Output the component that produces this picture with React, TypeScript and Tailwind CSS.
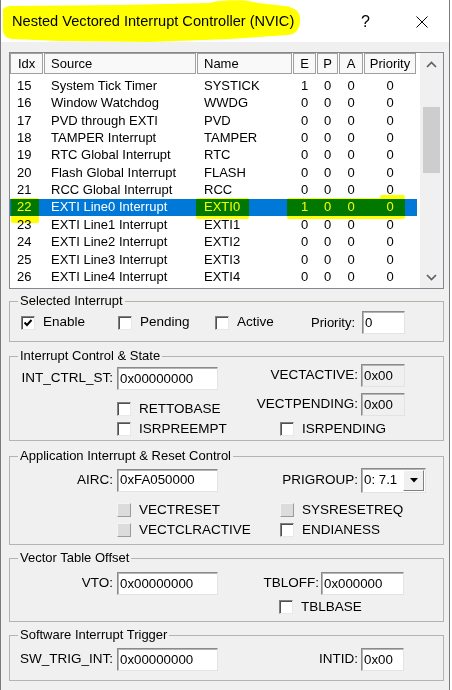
import React from "react";

type R = { i: string; s: string; n: string; e: string; sel?: boolean };
const ROWS: R[] = [
  { i: "15", s: "System Tick Timer", n: "SYSTICK", e: "1" },
  { i: "16", s: "Window Watchdog", n: "WWDG", e: "0" },
  { i: "17", s: "PVD through EXTI", n: "PVD", e: "0" },
  { i: "18", s: "TAMPER Interrupt", n: "TAMPER", e: "0" },
  { i: "19", s: "RTC Global Interrupt", n: "RTC", e: "0" },
  { i: "20", s: "Flash Global Interrupt", n: "FLASH", e: "0" },
  { i: "21", s: "RCC Global Interrupt", n: "RCC", e: "0" },
  { i: "22", s: "EXTI Line0 Interrupt", n: "EXTI0", e: "1", sel: true },
  { i: "23", s: "EXTI Line1 Interrupt", n: "EXTI1", e: "0" },
  { i: "24", s: "EXTI Line2 Interrupt", n: "EXTI2", e: "0" },
  { i: "25", s: "EXTI Line3 Interrupt", n: "EXTI3", e: "0" },
  { i: "26", s: "EXTI Line4 Interrupt", n: "EXTI4", e: "0" },
];

function HeadCell({ className, children }: { className: string; children: React.ReactNode }) {
  return (
    <div className={`flex items-center h-[21px] border border-[#a0a0a0] bg-[#f9f9f9] text-[13px] whitespace-nowrap ${className}`}>
      {children}
    </div>
  );
}

function Check({ checked = false, disabled = false }: { checked?: boolean; disabled?: boolean }) {
  if (disabled) {
    return (
      <span className="block w-[14px] h-[14px] shrink-0 bg-[#dcdcdc] border border-t-[#f4f4f4] border-l-[#f4f4f4] border-r-[#9a9a9a] border-b-[#9a9a9a]" />
    );
  }
  return (
    <span className="relative flex items-center justify-center w-[14px] h-[14px] shrink-0 bg-white border border-t-[#808080] border-l-[#808080] border-r-[#e8e8e8] border-b-[#e8e8e8] shadow-[inset_1px_1px_0_#505050]">
      {checked && (
        <svg width="10" height="10" viewBox="0 0 10 10">
          <path d="M1.5 4.5 L4 7 L8.5 2" fill="none" stroke="#000" strokeWidth="2" />
        </svg>
      )}
    </span>
  );
}

function CheckItem({
  label,
  checked,
  disabled,
  className = "",
}: {
  label: string;
  checked?: boolean;
  disabled?: boolean;
  className?: string;
}) {
  return (
    <div className={`flex items-center h-[14px] text-[13.5px] whitespace-nowrap ${className}`}>
      <Check checked={checked} disabled={disabled} />
      <span className="ml-[8px]">{label}</span>
    </div>
  );
}

function Field({ value, className, ro = false }: { value: string; className: string; ro?: boolean }) {
  return (
    <div
      className={`flex items-center h-[23px] pl-[2px] text-[13.3px] whitespace-nowrap border border-t-[#8a8a8a] border-l-[#8a8a8a] border-r-[#e3e3e3] border-b-[#e3e3e3] shadow-[inset_1px_1px_0_#b4b4b4] ${
        ro ? "bg-[#f0f0f0]" : "bg-white"
      } ${className}`}
    >
      {value}
    </div>
  );
}

function Label({ className, children }: { className: string; children: React.ReactNode }) {
  return <span className={`text-right text-[13.5px] whitespace-nowrap shrink-0 ${className}`}>{children}</span>;
}

function Group({ title, className, children }: { title: string; className: string; children: React.ReactNode }) {
  return (
    <fieldset className={`border border-[#b4b4b4] ${className}`}>
      <legend className="ml-[8px] px-[2px] leading-[16px] text-[13px] whitespace-nowrap">{title}</legend>
      {children}
    </fieldset>
  );
}

export default function App() {
  return (
    <div className="w-[452px] h-[690px] bg-white font-['Liberation_Sans',Arial,sans-serif] text-black">
      <div className="relative w-[450px] h-[690px] bg-[#f0f0f0] border-x border-[#7a7a7a] overflow-hidden">
        {/* Title bar */}
        <div className="flex items-center h-[42px] pt-[2px] bg-white">
          <span className="ml-[11px] text-[14.6px] whitespace-nowrap">Nested Vectored Interrupt Controller (NVIC)</span>
          <span className="flex-1" />
          <span className="text-[16px] leading-none w-[9px]">?</span>
          <svg className="ml-[46px] mr-[21px]" width="12" height="12" viewBox="0 0 12 12">
            <path d="M0.5 0.5 L11.5 11.5 M11.5 0.5 L0.5 11.5" stroke="#000" strokeWidth="1" fill="none" />
          </svg>
        </div>

        <div className="pl-[8px] pr-[5px] pt-[10px]">
          {/* List */}
          <div className="flex h-[237px] border border-[#828790] bg-white">
            <div className="w-[410px] flex flex-col overflow-hidden">
              <div className="flex gap-[1px]">
                <HeadCell className="w-[33px] pl-[7px]">Idx</HeadCell>
                <HeadCell className="w-[152px] pl-[6px]">Source</HeadCell>
                <HeadCell className="w-[95px] pl-[6px]">Name</HeadCell>
                <HeadCell className="w-[23px] justify-center">E</HeadCell>
                <HeadCell className="w-[21px] justify-center">P</HeadCell>
                <HeadCell className="w-[24px] justify-center">A</HeadCell>
                <HeadCell className="w-[52px] justify-center">Priority</HeadCell>
              </div>
              <div className="pt-[3px]">
                {ROWS.map((r) => (
                  <div
                    key={r.i}
                    className={`flex gap-[1px] items-center h-[17.36px] w-[407px] text-[13px] whitespace-nowrap ${
                      r.sel ? "bg-[#0078d7] text-white" : "text-black"
                    }`}
                  >
                    <span className="w-[33px] pl-[7px]">{r.i}</span>
                    <span className="w-[152px] pl-[7px]">{r.s}</span>
                    <span className="w-[95px] pl-[7px]">{r.n}</span>
                    <span className="w-[23px] text-center">{r.e}</span>
                    <span className="w-[21px] text-center">0</span>
                    <span className="w-[24px] text-center">0</span>
                    <span className="w-[52px] text-center">0</span>
                  </div>
                ))}
              </div>
            </div>
            {/* Scrollbar */}
            <div className="w-[23px] flex flex-col bg-[#f0f0f0]">
              <div className="h-[22px] flex items-center justify-center">
                <svg width="11" height="7" viewBox="0 0 11 7">
                  <path d="M1 6 L5.5 1.5 L10 6" fill="none" stroke="#606060" strokeWidth="1.7" />
                </svg>
              </div>
              <div className="mt-[32px] mx-auto w-[17px] h-[66px] bg-[#cdcdcd]" />
              <div className="flex-1" />
              <div className="h-[22px] flex items-center justify-center">
                <svg width="11" height="7" viewBox="0 0 11 7">
                  <path d="M1 1 L5.5 5.5 L10 1" fill="none" stroke="#606060" strokeWidth="1.7" />
                </svg>
              </div>
            </div>
          </div>

          {/* Selected Interrupt */}
          <Group title="Selected Interrupt" className="mt-[4px] pb-[5px]">
            <div className="flex items-center h-[27px] pl-[11px] text-[13.5px]">
              <CheckItem label="Enable" checked className="w-[97px]" />
              <CheckItem label="Pending" className="w-[97px]" />
              <CheckItem label="Active" className="w-[96px]" />
              <span className="w-[42px] whitespace-nowrap text-[13px]">Priority:</span>
              <Field value="0" className="ml-[9px] w-[43px]" />
            </div>
          </Group>

          {/* Interrupt Control & State */}
          <Group title="Interrupt Control & State" className="mt-[6px] pb-[4px]">
            <div className="grid grid-cols-[220px_1fr]">
              <div className="flex flex-col">
                <div className="mt-[3px] flex items-center h-[23px]">
                  <Label className="w-[103px]">INT_CTRL_ST:</Label>
                  <Field value="0x00000000" className="ml-[4px] w-[101px]" />
                </div>
                <CheckItem label="RETTOBASE" className="mt-[12px] pl-[107px]" />
                <CheckItem label="ISRPREEMPT" className="mt-[6px] pl-[107px]" />
              </div>
              <div className="flex flex-col">
                <div className="flex items-center h-[23px]">
                  <Label className="w-[128px]">VECTACTIVE:</Label>
                  <Field value="0x00" ro className="ml-[3px] w-[44px]" />
                </div>
                <div className="mt-[6px] flex items-center h-[23px]">
                  <Label className="w-[128px]">VECTPENDING:</Label>
                  <Field value="0x00" ro className="ml-[3px] w-[44px]" />
                </div>
                <CheckItem label="ISRPENDING" className="mt-[6px] pl-[50px]" />
              </div>
            </div>
          </Group>

          {/* Application Interrupt & Reset Control */}
          <Group title="Application Interrupt & Reset Control" className="mt-[7px] pb-[7px]">
            <div className="grid grid-cols-[220px_1fr] h-[32px] items-center">
              <div className="flex items-center">
                <Label className="w-[103px]">AIRC:</Label>
                <Field value="0xFA050000" className="ml-[4px] w-[101px]" />
              </div>
              <div className="flex items-center">
                <Label className="w-[128px]">PRIGROUP:</Label>
                <div className="ml-[3px] flex h-[25px] w-[65px] bg-white border border-t-[#8a8a8a] border-l-[#8a8a8a] border-r-[#e3e3e3] border-b-[#e3e3e3] shadow-[inset_1px_1px_0_#b4b4b4]">
                  <span className="flex-1 flex items-center pl-[2px] text-[13.3px] whitespace-nowrap">0: 7.1</span>
                  <span className="my-[1px] mr-[1px] w-[21px] flex items-center justify-center bg-[#f0f0f0] border border-t-white border-l-white border-r-[#808080] border-b-[#808080]">
                    <svg width="8" height="5" viewBox="0 0 8 5">
                      <path d="M0 0 L8 0 L4 4.5 Z" fill="#000" />
                    </svg>
                  </span>
                </div>
              </div>
            </div>
            <div className="grid grid-cols-[220px_1fr] mt-[7px]">
              <CheckItem label="VECTRESET" disabled className="pl-[107px]" />
              <CheckItem label="SYSRESETREQ" disabled className="pl-[50px]" />
            </div>
            <div className="grid grid-cols-[220px_1fr] mt-[6px]">
              <CheckItem label="VECTCLRACTIVE" disabled className="pl-[107px]" />
              <CheckItem label="ENDIANESS" className="pl-[50px]" />
            </div>
          </Group>

          {/* Vector Table Offset */}
          <Group title="Vector Table Offset" className="mt-[5px] pb-[7px]">
            <div className="grid grid-cols-[220px_1fr] mt-[6px] h-[23px] items-center">
              <div className="flex items-center">
                <Label className="w-[103px]">VTO:</Label>
                <Field value="0x00000000" className="ml-[4px] w-[101px]" />
              </div>
              <div className="flex items-center">
                <Label className="w-[89px]">TBLOFF:</Label>
                <Field value="0x000000" className="ml-[2px] w-[83px]" />
              </div>
            </div>
            <div className="grid grid-cols-[220px_1fr] mt-[5px]">
              <span />
              <CheckItem label="TBLBASE" className="pl-[49px]" />
            </div>
          </Group>

          {/* Software Interrupt Trigger */}
          <Group title="Software Interrupt Trigger" className="mt-[5px] pb-[9px]">
            <div className="grid grid-cols-[220px_1fr] mt-[5px] h-[23px] items-center">
              <div className="flex items-center">
                <Label className="w-[103px]">SW_TRIG_INT:</Label>
                <Field value="0x00000000" className="ml-[4px] w-[101px]" />
              </div>
              <div className="flex items-center">
                <Label className="w-[128px]">INTID:</Label>
                <Field value="0x00" className="ml-[3px] w-[43px]" />
              </div>
            </div>
          </Group>
        </div>

        {/* Highlighter marks */}
        <svg
          className="absolute left-[-1px] top-0 mix-blend-multiply pointer-events-none"
          width="310"
          height="44"
          viewBox="0 0 310 44"
        >
          <path
            d="M3,11 C3,7 7,6 14,6 L120,5 L210,3 C220,0 245,-1 258,3 L285,6 C298,8 301,14 300,22 C299,30 296,34 288,35 L230,39 L150,42 L60,41 L12,39 C5,38 3,34 3,28 Z"
            fill="#ffff00"
          />
        </svg>
        <div className="absolute left-[10px] top-[198px] w-[28px] h-[25px] bg-[#ffff00] mix-blend-multiply rounded-[2px]" />
        <div className="absolute left-[195px] top-[198px] w-[53px] h-[21px] bg-[#ffff00] mix-blend-multiply rounded-[2px]" />
        <div className="absolute left-[286px] top-[198px] w-[118px] h-[21px] bg-[#ffff00] mix-blend-multiply rounded-[2px]" />
        <div className="absolute left-[379px] top-[195px] w-[25px] h-[4px] bg-[#ffff00] mix-blend-multiply rounded-[2px]" />
      </div>
    </div>
  );
}
